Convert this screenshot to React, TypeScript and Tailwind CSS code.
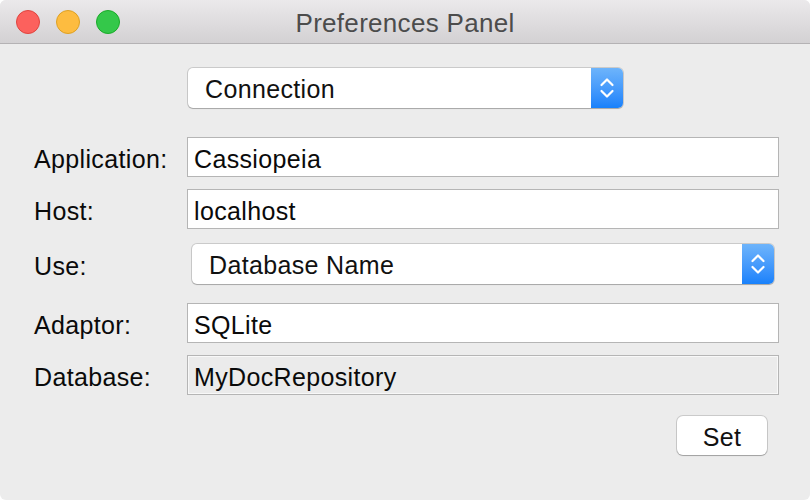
import React from 'react'

const font = { fontFamily: '"Liberation Sans", Arial, sans-serif' }

function Stepper() {
  return (
    <div className="flex h-full w-[32px] items-center justify-center rounded-r-[5px] bg-gradient-to-b from-[#6db4fb] to-[#1781fb]">
      <svg width="16" height="24" viewBox="0 0 16 24" fill="none" stroke="white" strokeWidth="2.2" strokeLinecap="round" strokeLinejoin="round">
        <path d="M2.5 9 L8 3.5 L13.5 9" />
        <path d="M2.5 15 L8 20.5 L13.5 15" />
      </svg>
    </div>
  )
}

function Popup({ label, width }: { label: string; width: string }) {
  return (
    <div className={`flex h-[40px] ${width} items-stretch rounded-[5px] bg-white shadow-[0_0_0_1px_rgba(0,0,0,0.14),0_1px_1px_rgba(0,0,0,0.18)]`}>
      <div className="flex flex-1 items-center pl-[17px] pt-[2px] text-[25px] leading-[30px] tracking-[0.35px] text-[#111]">{label}</div>
      <Stepper />
    </div>
  )
}

function Field({ value, disabled }: { value: string; disabled?: boolean }) {
  return (
    <div
      className={`flex h-[40px] flex-1 items-center border border-[#b5b5b5] pl-[6px] pt-[3px] text-[25px] leading-[30px] tracking-[0.35px] text-[#0a0a0a] ${
        disabled ? 'bg-[#ebebeb] shadow-[inset_0_0_0_1px_#f8f8f8]' : 'bg-white'
      }`}
    >
      {value}
    </div>
  )
}

function Row({ label, children, className = '' }: { label: string; children: React.ReactNode; className?: string }) {
  return (
    <div className={`flex h-[40px] items-center ${className}`}>
      <div className="w-[153px] shrink-0 pt-[3px] text-[25px] leading-[30px] tracking-[0.35px] text-[#0a0a0a]">{label}</div>
      {children}
    </div>
  )
}

export default function App() {
  return (
    <div className="h-[500px] w-[810px] bg-white" style={font}>
      <div className="flex h-full w-full flex-col overflow-hidden rounded-[6px] bg-[#ececec]">
        {/* Title bar */}
        <div className="relative flex h-[44px] shrink-0 items-center justify-center border-b border-[#b4b2b4] bg-gradient-to-b from-[#ebe9eb] to-[#d3d1d3]">
          <div className="absolute left-[16px] top-[10px] flex gap-[16px]">
            <span className="h-[24px] w-[24px] rounded-full border border-[#e0443e] bg-[#fc615d]" />
            <span className="h-[24px] w-[24px] rounded-full border border-[#dea123] bg-[#fdbc40]" />
            <span className="h-[24px] w-[24px] rounded-full border border-[#1aab29] bg-[#34c84a]" />
          </div>
          <span className="pt-[2px] text-[26px] leading-[30px] tracking-[0.3px] text-[#4c4c4c]">Preferences Panel</span>
        </div>

        {/* Section selector */}
        <div className="mt-[24px] flex justify-center pl-[1px]">
          <Popup label="Connection" width="w-[435px]" />
        </div>

        {/* Form */}
        <div className="mt-[29px] flex flex-col pl-[34px] pr-[31px]">
          <Row label="Application:">
            <Field value="Cassiopeia" />
          </Row>
          <Row label="Host:" className="mt-[12px]">
            <Field value="localhost" />
          </Row>
          <Row label="Use:" className="mt-[15px]">
            <div className="flex flex-1 pl-[5px] pr-[5px]">
              <Popup label="Database Name" width="flex-1" />
            </div>
          </Row>
          <Row label="Adaptor:" className="mt-[19px]">
            <Field value="SQLite" />
          </Row>
          <Row label="Database:" className="mt-[12px]">
            <Field value="MyDocRepository" disabled />
          </Row>
        </div>

        <div className="mt-[21px] flex justify-end pr-[43px]">
          <button className="flex h-[39px] w-[90px] items-center justify-center rounded-[6px] bg-white pt-[2px] text-[25px] leading-[30px] tracking-[0.3px] text-[#111] shadow-[0_0_0_1px_rgba(0,0,0,0.14),0_1px_1px_rgba(0,0,0,0.2)]">
            Set
          </button>
        </div>
      </div>
    </div>
  )
}
